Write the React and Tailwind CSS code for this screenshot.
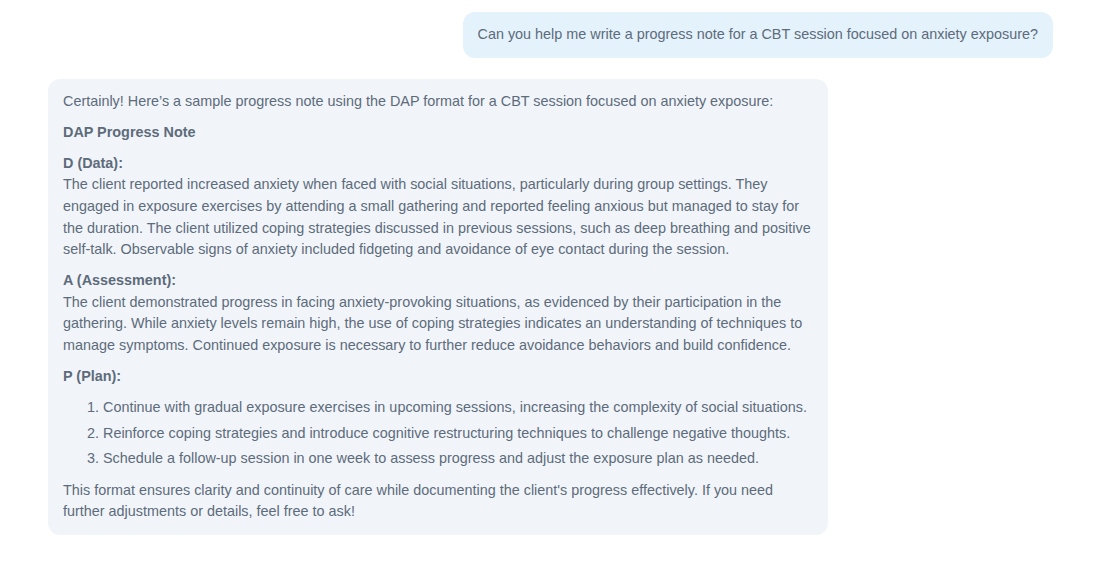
import React from "react";

const plan = [
  "Continue with gradual exposure exercises in upcoming sessions, increasing the complexity of social situations.",
  "Reinforce coping strategies and introduce cognitive restructuring techniques to challenge negative thoughts.",
  "Schedule a follow-up session in one week to assess progress and adjust the exposure plan as needed.",
];

const App = () => {
  return (
    <div
      className="w-full min-h-[587px] bg-white px-12 pt-3 text-[14.4px] leading-[21.6px] text-[#5d6b7b]"
      style={{ fontFamily: '"Liberation Sans", Arial, sans-serif' }}
    >
      {/* User message */}
      <div className="flex justify-end">
        <div className="rounded-xl bg-[#e4f2fb] px-[15px] py-3">
          Can you help me write a progress note for a CBT session focused on anxiety exposure?
        </div>
      </div>

      {/* Assistant reply */}
      <div className="mt-[21px] flex">
        <div className="w-[780px] rounded-xl bg-[#f1f5f9] px-[15px] pt-3 pb-3">
          <p className="mb-[9.5px]">
            Certainly! Here’s a sample progress note using the DAP format for a CBT session focused on anxiety exposure:
          </p>
          <p className="mb-[9.5px] font-bold">DAP Progress Note</p>
          <p className="mb-[9.5px]">
            <strong>D (Data):</strong>
            <br />
            The client reported increased anxiety when faced with social situations, particularly during group settings. They engaged in exposure exercises by attending a small gathering and reported feeling anxious but managed to stay for the duration. The client utilized coping strategies discussed in previous sessions, such as deep breathing and positive self-talk. Observable signs of anxiety included fidgeting and avoidance of eye contact during the session.
          </p>
          <p className="mb-[9.5px]">
            <strong>A (Assessment):</strong>
            <br />
            The client demonstrated progress in facing anxiety-provoking situations, as evidenced by their participation in the gathering. While anxiety levels remain high, the use of coping strategies indicates an understanding of techniques to manage symptoms. Continued exposure is necessary to further reduce avoidance behaviors and build confidence.
          </p>
          <p className="mb-[9.5px] font-bold">P (Plan):</p>
          <ol className="mb-[9.5px] list-decimal pl-10">
            {plan.map((item, i) => (
              <li key={i} className="mb-1">
                {item}
              </li>
            ))}
          </ol>
          <p>
            This format ensures clarity and continuity of care while documenting the client's progress effectively. If you need further adjustments or details, feel free to ask!
          </p>
        </div>
      </div>
    </div>
  );
};

export default App;
